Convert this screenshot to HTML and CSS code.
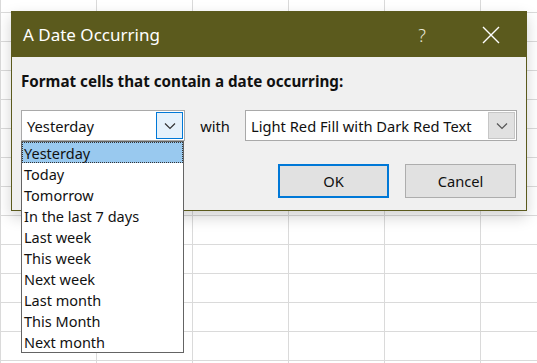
FILE: index.html
```html
<!DOCTYPE html>
<html>
<head>
<meta charset="utf-8">
<link rel="stylesheet" href="styles.css">
</head>
<body>
<div class="sheet"></div>
<div class="dialog">
  <div class="titlebar">
    <span class="title">A Date Occurring</span>
    <span class="help">?</span>
    <span class="close">
      <svg width="18" height="18" viewBox="0 0 18 18"><path d="M1 1 L17 17 M17 1 L1 17" stroke="#fff" stroke-width="1.4" fill="none"/></svg>
    </span>
  </div>
  <div class="body">
    <div class="label">Format cells that contain a date occurring:</div>
    <div class="row">
      <div class="combo combo-date">
        <span class="combo-text">Yesterday</span>
        <span class="combo-btn active">
          <svg width="12" height="8" viewBox="0 0 12 8"><path d="M1 1.5 L6 6.5 L11 1.5" stroke="#333" stroke-width="1.2" fill="none"/></svg>
        </span>
      </div>
      <span class="with">with</span>
      <div class="combo combo-fmt">
        <span class="combo-text">Light Red Fill with Dark Red Text</span>
        <span class="combo-btn">
          <svg width="12" height="8" viewBox="0 0 12 8"><path d="M1 1.5 L6 6.5 L11 1.5" stroke="#555" stroke-width="1.2" fill="none"/></svg>
        </span>
      </div>
    </div>
    <div class="buttons">
      <button class="btn default">OK</button>
      <button class="btn">Cancel</button>
    </div>
  </div>
</div>
<ul class="list">
  <li class="sel">Yesterday</li>
  <li>Today</li>
  <li>Tomorrow</li>
  <li>In the last 7 days</li>
  <li>Last week</li>
  <li>This week</li>
  <li>Next week</li>
  <li>Last month</li>
  <li>This Month</li>
  <li>Next month</li>
</ul>
</body>
</html>
```
FILE: styles.css
```css
html, body {
  margin: 0;
  padding: 0;
  width: 537px;
  height: 363px;
  overflow: hidden;
  font-family: "Noto Sans", "Open Sans", sans-serif;
}
.sheet {
  width: 537px;
  height: 363px;
  background-color: #fff;
  background-image:
    linear-gradient(to right, #dadada 1px, transparent 1px),
    linear-gradient(to bottom, #dadada 1px, transparent 1px);
  background-size: 96px 29px;
  background-position: 0px 12px;
}
.dialog {
  position: absolute;
  left: 11px;
  top: 11px;
  width: 514px;
  height: 198px;
  background: #f0f0f0;
  border: 1px solid #5b5a1d;
  box-shadow: 0 6px 14px rgba(0,0,0,0.18);
}
.titlebar {
  height: 45px;
  background: #5b5a1d;
  color: #fff;
  display: flex;
  align-items: center;
  font-size: 17px;
}
.title {
  margin-left: 11px;
  flex: 1;
}
.help {
  width: 22px;
  text-align: center;
  margin-right: 49px;
  font-size: 18px;
  font-weight: 300;
  color: #e8e8d8;
}
.close {
  display: flex;
  margin-right: 26px;
}
.body {
  padding: 0 9px 0 9px;
}
.label {
  font-weight: bold;
  font-size: 15.2px;
  color: #111;
  margin-top: 13px;
  height: 22px;
  line-height: 22px;
}
.row {
  display: flex;
  align-items: center;
  margin-top: 18px;
  height: 31px;
}
.combo {
  display: flex;
  align-items: center;
  box-sizing: border-box;
  height: 31px;
  background: #fff;
  border: 1px solid #a9a9a9;
  padding: 1px;
}
.combo-date {
  width: 164px;
}
.combo-fmt {
  width: 272px;
}
.combo-text {
  flex: 1;
  font-size: 14.7px;
  color: #111;
  padding-left: 4px;
  white-space: nowrap;
}
.combo-btn {
  box-sizing: border-box;
  width: 27px;
  height: 27px;
  display: flex;
  align-items: center;
  justify-content: center;
  background: #e1e1e1;
  border: 1px solid #c6c6c6;
}
.combo-btn.active {
  background: #e5f1fb;
  border-color: #0078d7;
}
.with {
  font-size: 14.7px;
  color: #111;
  width: 60px;
  text-align: center;
}
.buttons {
  display: flex;
  justify-content: flex-end;
  gap: 16px;
  margin-top: 23px;
  padding-right: 1px;
}
.btn {
  box-sizing: border-box;
  width: 111px;
  height: 34px;
  background: #e1e1e1;
  border: 1px solid #adadad;
  font-family: inherit;
  font-size: 14.7px;
  color: #111;
  padding: 0;
}
.btn.default {
  border: 2px solid #0078d7;
}
.list {
  position: absolute;
  left: 21px;
  top: 141px;
  width: 163px;
  box-sizing: border-box;
  margin: 0;
  padding: 0;
  list-style: none;
  background: #fff;
  border: 1px solid #646464;
}
.list li {
  height: 21px;
  line-height: 22px;
  font-size: 14.5px;
  color: #111;
  padding-left: 2px;
  box-sizing: border-box;
  white-space: nowrap;
}
.list li.sel {
  background: #99c9ef;
  outline: 1px dotted #333;
  outline-offset: -1px;
}
```
